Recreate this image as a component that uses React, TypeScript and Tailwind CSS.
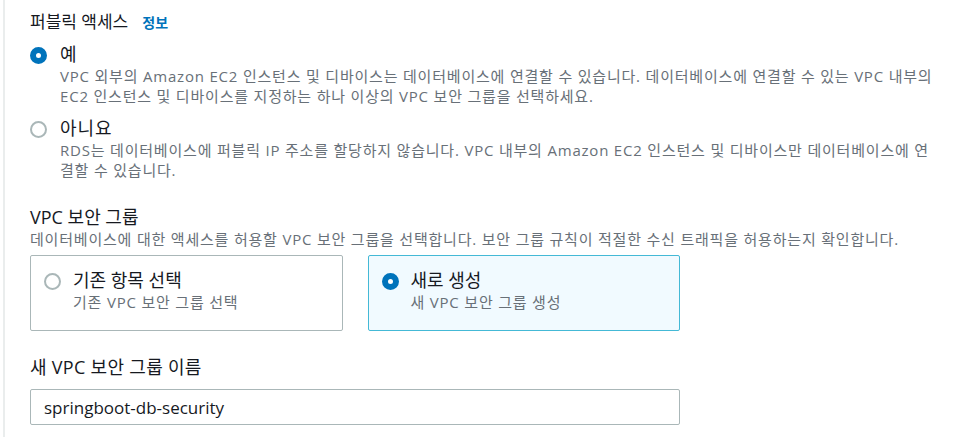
import React, { useState } from 'react';

const font = { fontFamily: '"Open Sans", "Noto Sans CJK KR", sans-serif' };

function Radio({ checked }: { checked: boolean }) {
  return checked ? (
    <span className="block size-[17px] shrink-0 rounded-full border-[6px] border-[#0073bb] bg-white" />
  ) : (
    <span className="block size-[17px] shrink-0 rounded-full border-2 border-[#aab7b8] bg-white" />
  );
}

export default function App() {
  const [publicAccess, setPublicAccess] = useState('yes');
  const [sgMode, setSgMode] = useState('new');
  const [sgName, setSgName] = useState('springboot-db-security');

  const options = [
    {
      value: 'yes',
      label: '예',
      desc: 'VPC 외부의 Amazon EC2 인스턴스 및 디바이스는 데이터베이스에 연결할 수 있습니다. 데이터베이스에 연결할 수 있는 VPC 내부의 EC2 인스턴스 및 디바이스를 지정하는 하나 이상의 VPC 보안 그룹을 선택하세요.',
    },
    {
      value: 'no',
      label: '아니요',
      desc: 'RDS는 데이터베이스에 퍼블릭 IP 주소를 할당하지 않습니다. VPC 내부의 Amazon EC2 인스턴스 및 디바이스만 데이터베이스에 연결할 수 있습니다.',
    },
  ];

  const tiles = [
    { value: 'existing', label: '기존 항목 선택', desc: '기존 VPC 보안 그룹 선택' },
    { value: 'new', label: '새로 생성', desc: '새 VPC 보안 그룹 생성' },
  ];

  return (
    <div className="min-h-screen bg-white text-[#16191f]" style={font}>
      <div className="ml-[3px] min-h-screen border-l-2 border-[#eaeded] pl-[25px] pt-[10px] pr-[18px]">
        {/* Public access */}
        <div className="flex items-baseline gap-[14px]">
          <h2 className="text-[17px] leading-6">퍼블릭 액세스</h2>
          <span className="text-[14px] font-bold text-[#0073bb]">정보</span>
        </div>

        <div className="mt-[8px] space-y-[10px]">
          {options.map(o => (
            <div key={o.value} className="flex cursor-pointer gap-[13px]" onClick={() => setPublicAccess(o.value)}>
              <div className="pt-[5px]">
                <Radio checked={publicAccess === o.value} />
              </div>
              <div>
                <div className="text-[18px] leading-6 tracking-[1px]">{o.label}</div>
                <p className="text-[15px] leading-5 tracking-[0.8px] text-[#687078]">{o.desc}</p>
              </div>
            </div>
          ))}
        </div>

        {/* VPC security group */}
        <div className="mt-[25px]">
          <h2 className="text-[18px] leading-6">VPC 보안 그룹</h2>
          <p className="text-[15px] leading-5 tracking-[0.8px] text-[#687078]">
            데이터베이스에 대한 액세스를 허용할 VPC 보안 그룹을 선택합니다. 보안 그룹 규칙이 적절한 수신 트래픽을 허용하는지 확인합니다.
          </p>
        </div>

        <div className="mt-[6px] grid w-[650px] grid-cols-2 gap-[25px]">
          {tiles.map(t => {
            const active = sgMode === t.value;
            return (
              <div
                key={t.value}
                onClick={() => setSgMode(t.value)}
                className={`flex h-[76px] cursor-pointer gap-[12px] rounded-[2px] border pl-[13px] pt-[12px] ${
                  active ? 'border-[#44b9d6] bg-[#f1faff]' : 'border-[#aab7b8] bg-white'
                }`}
              >
                <div className="pt-[5px]">
                  <Radio checked={active} />
                </div>
                <div>
                  <div className="text-[18px] leading-6">{t.label}</div>
                  <div className="text-[15px] leading-5 tracking-[0.8px] text-[#687078]">{t.desc}</div>
                </div>
              </div>
            );
          })}
        </div>

        {/* Name */}
        <div className="mt-[24px]">
          <label className="block text-[18px] leading-6 tracking-[0.3px]">새 VPC 보안 그룹 이름</label>
          <input
            value={sgName}
            onChange={e => setSgName(e.target.value)}
            className="mt-[10px] h-9 w-[650px] rounded-[2px] border border-[#aab7b8] bg-white px-[13px] text-[17px] text-[#16191f] outline-none"
            style={font}
          />
        </div>
      </div>
    </div>
  );
}
